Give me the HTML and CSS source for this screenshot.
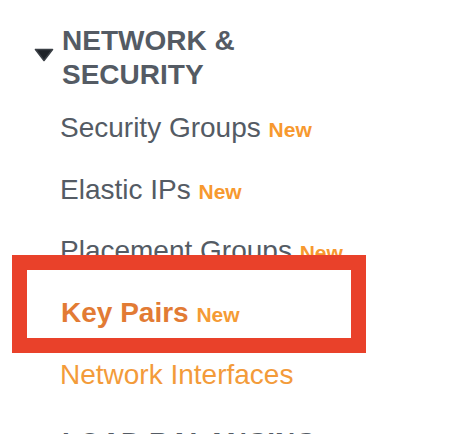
FILE: index.html
```html
<!DOCTYPE html>
<html>
<head>
<meta charset="utf-8">
<link rel="stylesheet" href="styles.css">
</head>
<body>
<nav class="nav">
  <section class="group">
    <div class="group-head">
      <svg class="caret" width="20" height="14" viewBox="0 0 20 14"><path d="M1.5 1.5 H18.5 L10 12.5 Z" fill="#1f2328" stroke="#3a3f45" stroke-width="1.6" stroke-linejoin="round"/></svg>
      <h2 class="group-title">NETWORK &amp;<br>SECURITY</h2>
    </div>
    <ul class="items">
      <li class="item">Security Groups <span class="new">New</span></li>
      <li class="item">Elastic IPs <span class="new">New</span></li>
      <li class="item">Placement Groups <span class="new">New</span></li>
      <li class="item item-active">Key Pairs <span class="new">New</span></li>
      <li class="item item-link">Network Interfaces</li>
    </ul>
  </section>
  <section class="group group-next">
    <div class="group-head">
      <svg class="caret" width="20" height="14" viewBox="0 0 20 14"><path d="M1.5 1.5 H18.5 L10 12.5 Z" fill="#1f2328" stroke="#3a3f45" stroke-width="1.6" stroke-linejoin="round"/></svg>
      <h2 class="group-title">LOAD BALANCING</h2>
    </div>
  </section>
  <div class="highlight"></div>
</nav>
</body>
</html>
```
FILE: styles.css
```css
html, body {
  margin: 0;
  padding: 0;
  background: #ffffff;
}
body {
  font-family: "Liberation Sans", Arial, Helvetica, sans-serif;
  color: #545b64;
  overflow: hidden;
}
.nav {
  position: relative;
  padding-top: 24px;
}
.group-head {
  display: flex;
  align-items: flex-start;
  padding-left: 34px;
}
.caret {
  flex: none;
  margin-top: 24px;
  margin-right: 8px;
}
.group-title {
  margin: 0;
  font-size: 28px;
  line-height: 34px;
  font-weight: 700;
  color: #545b64;
}
.items {
  list-style: none;
  margin: 5px 0 0 0;
  padding: 0 0 0 60px;
}
.item {
  font-size: 28px;
  line-height: 34px;
  height: 34px;
  padding: 14px 0 13.7px;
  color: #545b64;
  white-space: nowrap;
}
.new {
  font-size: 21px;
  line-height: 20px;
  font-weight: 700;
  color: #f7992f;
}
.item-active {
  font-weight: 700;
  color: #e27b34;
  padding-left: 1px;
}
.item-active .new {
  color: #f59b35;
}
.item-link {
  color: #f39b3a;
}
.group-next {
  margin-top: 21px;
}
.highlight {
  position: absolute;
  left: 12px;
  top: 255px;
  width: 324px;
  height: 68px;
  border: 15px solid #e9412a;
}
```
